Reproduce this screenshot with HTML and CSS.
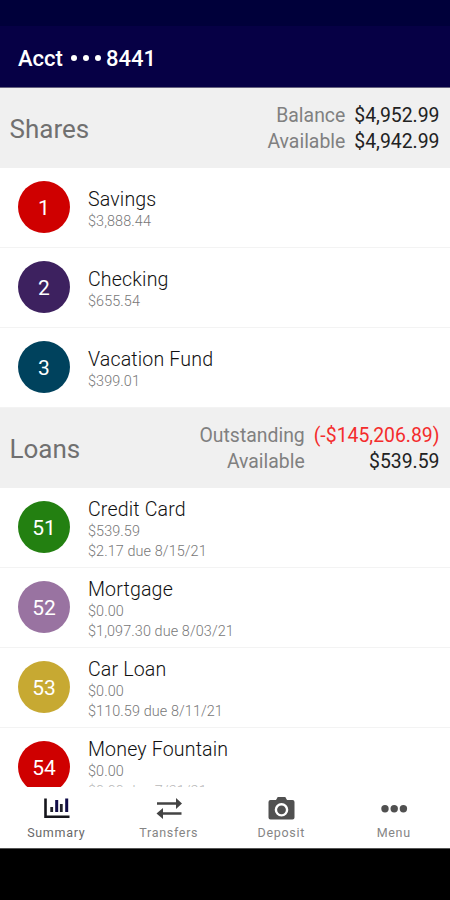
FILE: index.html
```html
<!DOCTYPE html>
<html lang="en">
<head>
    <meta charset="UTF-8">
    <meta name="viewport" content="width=device-width, initial-scale=1.0">
    <title>Account Summary</title>
    <link rel="stylesheet" href="styles.css">
</head>
<body>
    <div class="status-bar"></div>
    <header class="header">
        <span>Acct</span>
        <span class="mask"><i></i><i></i><i></i></span>
        <span>8441</span>
    </header>

    <main class="accounts">
        <div class="section-header">
            <div class="section-title">Shares</div>
            <div class="totals">
                <span class="label">Balance</span><span class="amount">$4,952.99</span>
                <span class="label">Available</span><span class="amount">$4,942.99</span>
            </div>
        </div>
        <div class="account">
            <div class="badge red">1</div>
            <div class="details">
                <div class="name">Savings</div>
                <div class="info">$3,888.44</div>
            </div>
        </div>
        <div class="account">
            <div class="badge purple">2</div>
            <div class="details">
                <div class="name">Checking</div>
                <div class="info">$655.54</div>
            </div>
        </div>
        <div class="account">
            <div class="badge teal">3</div>
            <div class="details">
                <div class="name">Vacation Fund</div>
                <div class="info">$399.01</div>
            </div>
        </div>

        <div class="section-header">
            <div class="section-title">Loans</div>
            <div class="totals">
                <span class="label">Outstanding</span><span class="amount negative">(-$145,206.89)</span>
                <span class="label">Available</span><span class="amount">$539.59</span>
            </div>
        </div>
        <div class="account">
            <div class="badge green">51</div>
            <div class="details">
                <div class="name">Credit Card</div>
                <div class="info">$539.59</div>
                <div class="info">$2.17 due 8/15/21</div>
            </div>
        </div>
        <div class="account">
            <div class="badge lilac">52</div>
            <div class="details">
                <div class="name">Mortgage</div>
                <div class="info">$0.00</div>
                <div class="info">$1,097.30 due 8/03/21</div>
            </div>
        </div>
        <div class="account">
            <div class="badge gold">53</div>
            <div class="details">
                <div class="name">Car Loan</div>
                <div class="info">$0.00</div>
                <div class="info">$110.59 due 8/11/21</div>
            </div>
        </div>
        <div class="account">
            <div class="badge red">54</div>
            <div class="details">
                <div class="name">Money Fountain</div>
                <div class="info">$0.00</div>
                <div class="info faded">$0.00 due 7/31/21</div>
            </div>
        </div>
    </main>

    <nav class="tabs">
        <a class="tab active">
            <svg width="28" height="24" viewBox="0 0 28 24">
                <path d="M3.500 2.500v18.200H27.500" fill="none" stroke="#16161c" stroke-width="2.600"/>
                <path d="M9.700 11v5M19.300 8v8" stroke="#22222c" stroke-width="2.800"/>
                <path d="M14.700 4v12M24.700 2.500v13.500" stroke="#100c48" stroke-width="3"/>
            </svg>
            <span>Summary</span>
        </a>
        <a class="tab">
            <svg width="28" height="24" viewBox="0 0 28 24">
                <path d="M2 7.500H22M6 17.500h20.500" stroke="#444" stroke-width="2.400"/>
                <path d="M21 2l6 5.500-6 5.500zM8 12l-6.500 5.500L8 23z" fill="#444"/>
            </svg>
            <span>Transfers</span>
        </a>
        <a class="tab">
            <svg width="28" height="24" viewBox="0 0 28 24">
                <path d="M3.500 4h5.500L10.700 1h7.600l1.700 3H25.500a2 2 0 0 1 2 2V21.500a2 2 0 0 1-2 2H3.500a2 2 0 0 1-2-2V6a2 2 0 0 1 2-2z" fill="#505050"/>
                <circle cx="14.500" cy="13.800" r="5.600" fill="#505050" stroke="#fff" stroke-width="2.400"/>
            </svg>
            <span>Deposit</span>
        </a>
        <a class="tab">
            <svg width="28" height="24" viewBox="0 0 28 24" fill="#505050">
                <circle cx="5" cy="12.700" r="3.700"/>
                <circle cx="14.200" cy="12.700" r="3.700"/>
                <circle cx="23.400" cy="12.700" r="3.700"/>
            </svg>
            <span>Menu</span>
        </a>
    </nav>
    <div class="system-bar"></div>
</body>
</html>
```
FILE: styles.css
```css
* {
    box-sizing: border-box;
}

body {
    margin: 0;
    height: 900px;
    display: flex;
    flex-direction: column;
    overflow: hidden;
    background: #fff;
    font-family: Roboto, 'Liberation Sans', sans-serif;
}

.status-bar {
    height: 26px;
    flex: none;
    background: #00003a;
}

.header {
    height: 62px;
    flex: none;
    display: flex;
    align-items: center;
    padding: 4px 18px 0;
    background: #060045;
    border-bottom: 1px solid #65627f;
    color: #fff;
    font-size: 22px;
    font-weight: 500;
}

.mask {
    display: flex;
    gap: 6px;
    margin: -2px 5px 0 8px;
}

.mask i {
    width: 6px;
    height: 6px;
    border-radius: 50%;
    background: #fff;
}

.accounts {
    height: 699px;
    flex: none;
    overflow: hidden;
}

.section-header {
    height: 80px;
    display: flex;
    align-items: center;
    justify-content: space-between;
    padding: 0 10.5px 0 9.5px;
    background: #f0f0f0;
}

.section-title {
    color: #707070;
    font-size: 26px;
    padding-top: 2px;
}

.totals {
    display: grid;
    grid-template-columns: auto auto;
    column-gap: 9px;
    text-align: right;
    font-size: 19.4px;
    line-height: 26.5px;
    padding-top: 2px;
}

.label {
    color: #808080;
}

.amount {
    color: #222;
}

.negative {
    color: #f42c2c;
}

.account {
    height: 80px;
    display: flex;
    align-items: center;
    gap: 18px;
    padding-left: 18px;
    border-bottom: 1px solid #f3f3f3;
}

.badge {
    width: 52px;
    height: 52px;
    margin-bottom: 1px;
    border-radius: 50%;
    color: #fff;
    font-size: 21px;
    line-height: 55px;
    text-align: center;
}

.red { background: #cf0000; }
.purple { background: #3d215f; }
.teal { background: #00425d; }
.green { background: #238011; }
.lilac { background: #9973a1; }
.gold { background: #c7a932; }

.details {
    padding-top: 5px;
}

.name {
    color: #111;
    font-size: 19.6px;
    font-weight: 300;
    line-height: 24px;
    letter-spacing: 0.15px;
}

.info {
    color: #777;
    font-size: 14.4px;
    font-weight: 300;
    line-height: 20px;
    letter-spacing: 0.1px;
}

.faded {
    color: #b8b8b8;
}

.tabs {
    height: 61px;
    flex: none;
    display: grid;
    grid-template-columns: repeat(4, 1fr);
    background: #fff;
}

.tab {
    display: flex;
    flex-direction: column;
    align-items: center;
    padding-top: 9px;
    color: #858585;
    font-size: 12.5px;
    line-height: 15px;
    letter-spacing: 0.7px;
}

.tab span {
    margin-top: 5px;
}

.active {
    color: #686868;
}

.system-bar {
    flex: 1;
    background: #000;
    border-top: 1px solid #555;
}
```
